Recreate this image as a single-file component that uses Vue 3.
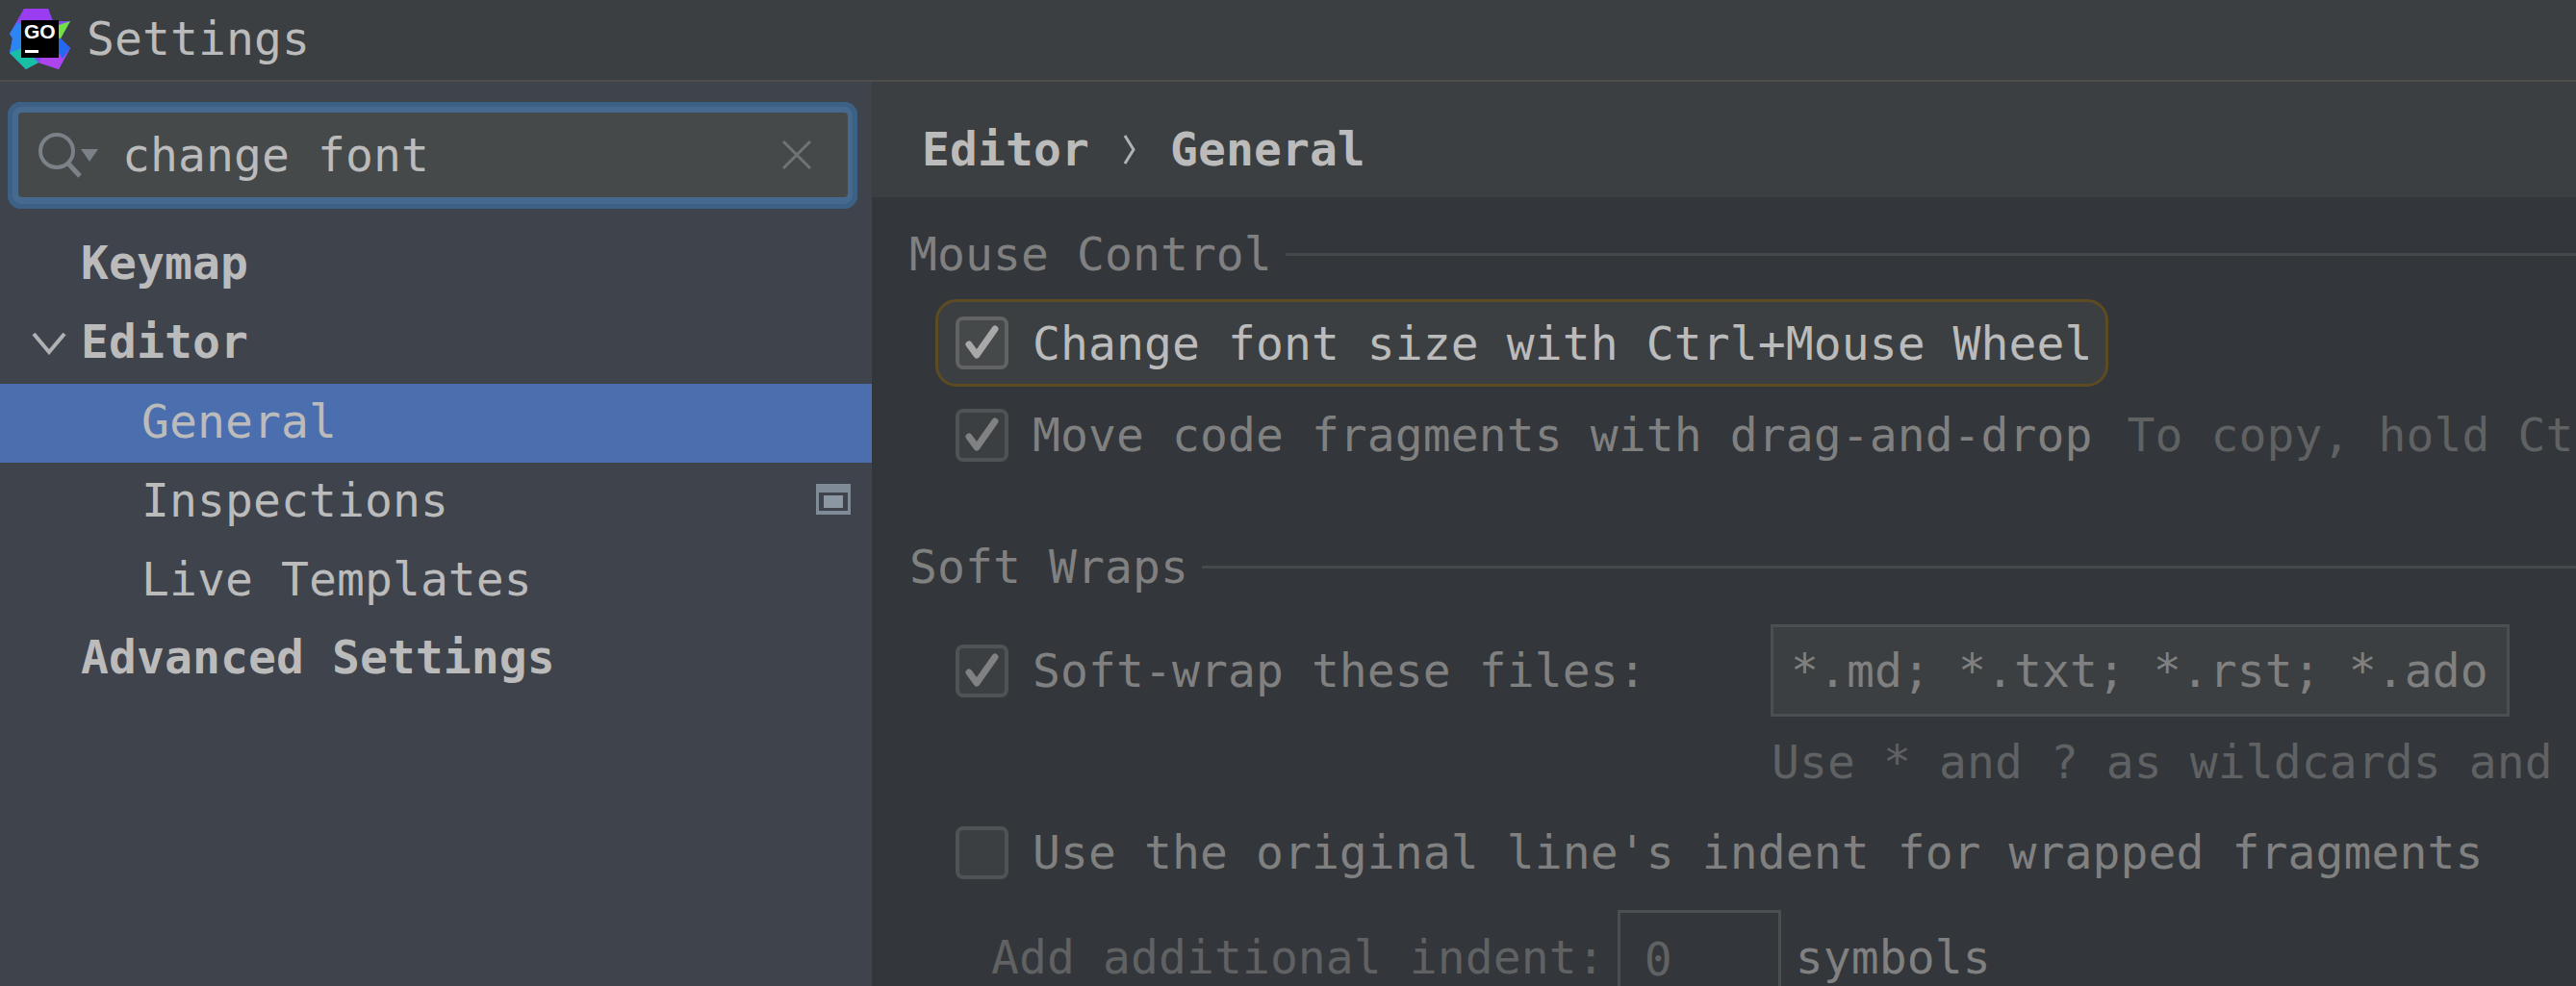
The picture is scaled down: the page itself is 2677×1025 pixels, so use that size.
<script setup>
const tree = [
  { label: "Keymap", level: "top" },
  { label: "Editor", level: "top", open: true },
  { label: "General", level: "child", selected: true },
  { label: "Inspections", level: "child", badge: true },
  { label: "Live Templates", level: "child" },
  { label: "Advanced Settings", level: "top" },
];
</script>

<template>
  <div class="window">
    <header class="titlebar">
      <svg class="logo" viewBox="0 0 64 64" width="64" height="64">
        <polygon points="15,0 40,0 45,13 63,13 53,31 63,41 51,63 30,56 17,63 0,46 3,31 0,26" fill="#7a4cf2" />
        <polygon points="15,0 40,0 47,20 20,25 8,14" fill="#9a3df0" />
        <polygon points="8,14 0,26 3,31 0,46 17,63 25,40 20,20" fill="#2b86f4" />
        <polygon points="0,46 17,63 30,56 15,40" fill="#19bfa5" />
        <polygon points="40,40 30,56 51,63 63,41 50,30" fill="#ad45ee" />
        <polygon points="53,31 63,41 55,52 45,35" fill="#2468f0" />
        <polygon points="48,18 63,13 53,31 49,30" fill="#70e044" />
        <rect x="12" y="12" width="39" height="39" fill="#000" />
        <text x="15" y="31" class="logo-text">GO</text>
        <rect x="16" y="43" width="14" height="3" fill="#fff" />
      </svg>
      <span class="title">Settings</span>
    </header>

    <div class="body">
      <aside class="sidebar">
        <div class="search">
          <div class="search-field">
            <svg class="search-icon" viewBox="0 0 64 48" width="64" height="48">
              <circle cx="20" cy="20" r="17" fill="none" stroke="#7a8288" stroke-width="4" />
              <line x1="32" y1="33" x2="44" y2="46" stroke="#7a8288" stroke-width="5" />
              <polygon points="45,18 63,18 54,31" fill="#7a8288" />
            </svg>
            <span class="search-text">change font</span>
            <svg class="clear" viewBox="0 0 32 32" width="32" height="32">
              <path d="M2 2 L30 30 M30 2 L2 30" stroke="#6e7376" stroke-width="3" fill="none" />
            </svg>
          </div>
        </div>

        <ul class="tree">
          <li
            v-for="item in tree"
            :key="item.label"
            class="tree-row"
            :class="[item.level, { selected: item.selected }]"
          >
            <svg v-if="item.open" class="chevron" viewBox="0 0 36 24" width="36" height="24">
              <path d="M2 2 L18 21 L34 2" fill="none" stroke="#afb1b3" stroke-width="4" />
            </svg>
            <span>{{ item.label }}</span>
            <svg v-if="item.badge" class="badge" viewBox="0 0 36 32" width="36" height="32">
              <path d="M0 0H36V32H0Z M3 9V28H33V9Z" fill="#7f8b96" fill-rule="evenodd" />
              <rect x="8" y="12" width="20" height="13" fill="#8b98a3" />
            </svg>
          </li>
        </ul>
      </aside>

      <main class="content">
        <div class="crumbs">
          <b>Editor</b>
          <svg class="crumb-sep" viewBox="0 0 12 31" width="12" height="31">
            <path d="M1 1 L10 15.5 L1 30" fill="none" stroke="#afb1b3" stroke-width="3" />
          </svg>
          <b>General</b>
        </div>

        <div class="settings">
          <div class="group-title first">
            <span>Mouse Control</span><i class="rule"></i>
          </div>

          <div class="option highlight">
            <span class="check on"><svg viewBox="0 0 47 47" width="47" height="47"><path d="M10 25 L18 36 L37 9" fill="none" stroke="#a8a8a8" stroke-width="7" stroke-linecap="round" stroke-linejoin="round" /></svg></span>
            <span class="label bright">Change font size with Ctrl+Mouse Wheel</span>
          </div>
          <div class="option second">
            <span class="check on"><svg viewBox="0 0 47 47" width="47" height="47"><path d="M10 25 L18 36 L37 9" fill="none" stroke="#808182" stroke-width="7" stroke-linecap="round" stroke-linejoin="round" /></svg></span>
            <span class="label">Move code fragments with drag-and-drop</span>
            <span class="comment">To copy, hold Ctrl</span>
          </div>

          <div class="group-title wraps">
            <span>Soft Wraps</span><i class="rule"></i>
          </div>

          <div class="option wrap-row">
            <span class="check on"><svg viewBox="0 0 47 47" width="47" height="47"><path d="M10 25 L18 36 L37 9" fill="none" stroke="#808182" stroke-width="7" stroke-linecap="round" stroke-linejoin="round" /></svg></span>
            <span class="label wrap-label">Soft-wrap these files:</span>
            <div class="input files"><span>*.md; *.txt; *.rst; *.adoc</span></div>
          </div>
          <div class="hint">Use * and ? as wildcards and ; to separate</div>

          <div class="option indent-row">
            <span class="check"></span>
            <span class="label">Use the original line's indent for wrapped fragments</span>
          </div>

          <div class="additional">
            <span class="dim">Add additional indent:</span>
            <div class="input zero"><span>0</span></div>
            <span class="label">symbols</span>
          </div>
        </div>
      </main>
    </div>
  </div>
</template>

<style>
html,
body {
  margin: 0;
  background: #33363a;
  overflow: hidden;
}
</style>

<style scoped>
.window {
  width: 2677px;
  height: 1025px;
  display: flex;
  flex-direction: column;
  overflow: hidden;
  font-family: "DejaVu Sans Mono", "Liberation Mono", monospace;
  font-size: 48px;
  letter-spacing: 0.09px;
  color: #bbbbbb;
}
.titlebar {
  height: 85px;
  flex: none;
  box-sizing: border-box;
  display: flex;
  align-items: center;
  gap: 16px;
  padding-left: 10px;
  background: #3c3f41;
  border-bottom: 2px solid #4e4e4c;
}
.logo {
  flex: none;
  margin-top: -1px;
}
.logo-text {
  font-family: "Liberation Sans", Arial, sans-serif;
  font-weight: 700;
  font-size: 21px;
  letter-spacing: 0;
  fill: #fff;
}
.title {
  line-height: 1;
  margin-top: -3px;
}
.body {
  flex: 1;
  display: flex;
  min-height: 0;
}
.sidebar {
  width: 906px;
  flex: none;
  background: #3f434c;
}
.search {
  margin: 21px 15px 0 8px;
  box-sizing: border-box;
  height: 111px;
  padding: 11px 10px 12px 11px;
  background: #46698f;
  border-radius: 14px;
  box-shadow: inset 0 0 0 5px #3d6185;
}
.search-field {
  height: 88px;
  display: flex;
  align-items: center;
  padding: 0 37px 0 20px;
  background: #45494a;
  border-radius: 4px;
}
.search-icon {
  flex: none;
}
.search-text {
  flex: 1;
  margin-left: 24px;
}
.clear {
  flex: none;
}
.tree {
  list-style: none;
  margin: 18px 0 0;
  padding: 0;
}
.tree-row {
  position: relative;
  box-sizing: border-box;
  height: 82px;
  padding-bottom: 4px;
  display: flex;
  align-items: center;
}
.tree-row.top {
  padding-left: 84px;
  padding-bottom: 6px;
  font-weight: 700;
}
.tree-row.child {
  padding-left: 147px;
}
.tree-row.selected {
  background: #4b6eaf;
}
.chevron {
  position: absolute;
  left: 33px;
  top: 28px;
}
.badge {
  position: absolute;
  right: 22px;
  top: 22px;
}
.content {
  flex: 1;
  min-width: 0;
  background: #33363a;
  overflow: hidden;
}
.crumbs {
  height: 120px;
  box-sizing: border-box;
  display: flex;
  align-items: center;
  padding: 20px 0 0 52px;
  gap: 36px;
  background: #3c3f41;
}
.crumb-sep {
  flex: none;
}
.settings {
  padding-left: 39px;
  color: #808080;
}
.group-title {
  display: flex;
  align-items: center;
  gap: 14px;
  height: 60px;
  white-space: nowrap;
}
.group-title.first {
  margin-top: 29px;
}
.group-title.wraps {
  margin-top: 79px;
}
.rule {
  flex: 1;
  height: 3px;
  background: #46494b;
}
.option {
  display: flex;
  align-items: center;
  white-space: nowrap;
}
.check {
  flex: none;
  box-sizing: border-box;
  width: 55px;
  height: 55px;
  display: flex;
  align-items: center;
  justify-content: center;
  border: 4px solid #505355;
  border-radius: 8px;
  background: #3c3f41;
  margin-right: 25px;
}
.highlight {
  margin: 17px 0 0 27px;
  box-sizing: border-box;
  width: 1219px;
  height: 91px;
  padding-left: 18px;
  background: #3c3f41;
  border: 3px solid #5d4b22;
  border-radius: 22px;
}
.highlight .check {
  border-color: #616364;
  background: #45494a;
}
.label.bright {
  color: #bbbbbb;
}
.second {
  margin: 22px 0 0 48px;
}
.comment {
  margin-left: 36px;
  color: #5f6163;
}
.wrap-row {
  margin: 30px 0 0 48px;
  height: 96px;
}
.wrap-label {
  width: 767px;
}
.input {
  box-sizing: border-box;
  display: flex;
  align-items: center;
  overflow: hidden;
  white-space: nowrap;
  border: 3px solid #4c4f51;
}
.files {
  width: 768px;
  height: 96px;
  padding: 0 20px 0 18px;
  background: #3c3f41;
}
.files span {
  overflow: hidden;
}
.hint {
  margin: 17px 0 0 896px;
  height: 60px;
  line-height: 60px;
  white-space: nowrap;
  color: #5f6163;
}
.indent-row {
  margin: 36px 0 0 48px;
}
.additional {
  display: flex;
  align-items: flex-start;
  margin: 32px 0 0 85px;
  white-space: nowrap;
  line-height: 98px;
}
.dim {
  color: #5f6163;
  margin-right: 13px;
}
.zero {
  width: 170px;
  height: 98px;
  padding-left: 25px;
  border-bottom: none;
  color: #5f6163;
  margin-right: 15px;
}
</style>
